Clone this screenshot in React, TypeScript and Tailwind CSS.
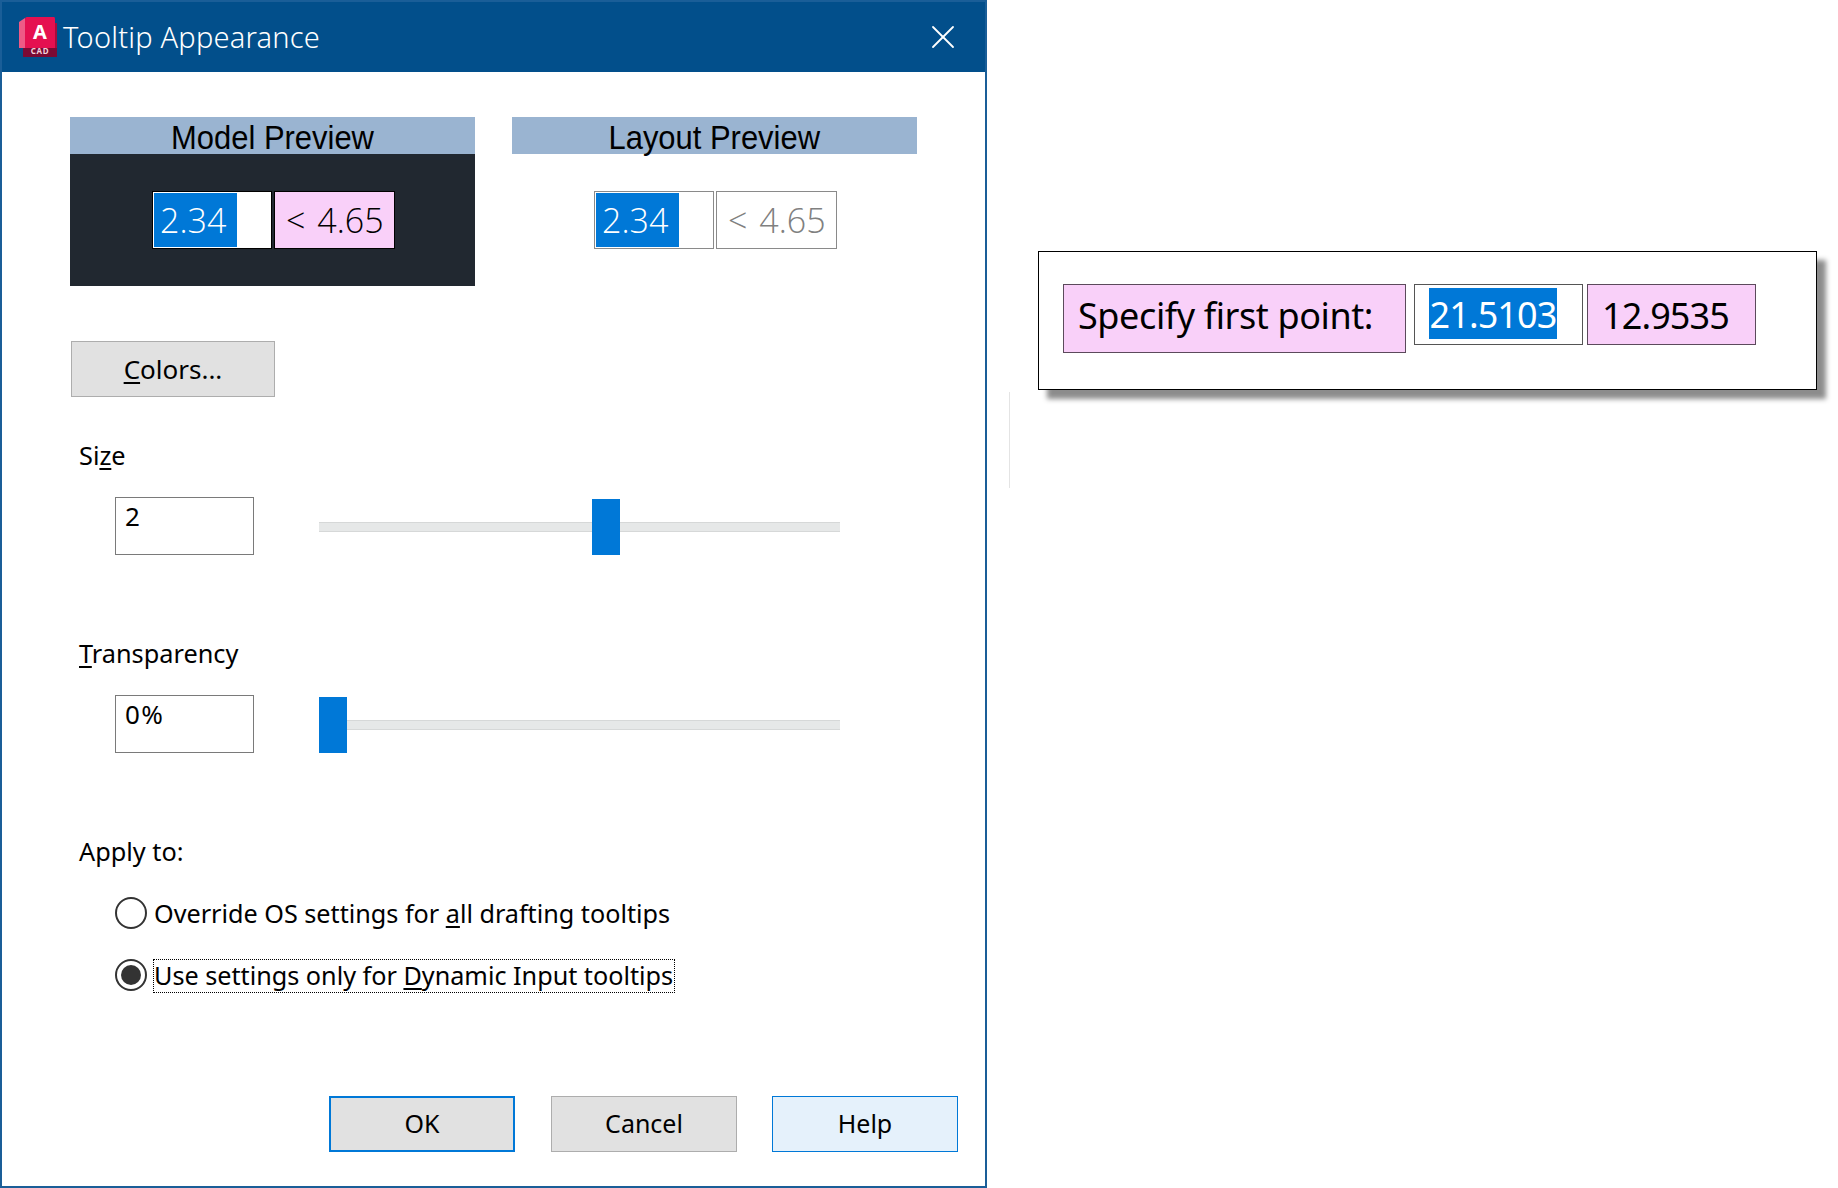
import React from "react";
import { X } from "lucide-react";

const ui = "font-['Noto_Sans','Open_Sans',sans-serif]";

const AutoCadLogo = () => (
  <svg width="38" height="41" viewBox="0 0 38 41" className="shrink-0">
    <path d="M0 5 L6 1 L6 31 L0 31 Z" fill="#ee5a86" />
    <path d="M4 31 H38 V40 H4 Z" fill="#7a0a34" />
    <path d="M6 2 Q6 0 8 0 H35 Q36 0 36 2 V31 H6 Z" fill="#e51050" />
    <path d="M36 6 H38 V31 H36 Z" fill="#a50c3c" />
    <text x="21" y="22" textAnchor="middle" fontSize="20" fontWeight="700" fill="#fff" fontFamily="Noto Sans, sans-serif">A</text>
    <text x="21" y="36.5" textAnchor="middle" fontSize="8" fontWeight="700" fill="#f3d4dc" letterSpacing="0.6" fontFamily="Noto Sans, sans-serif">CAD</text>
  </svg>
);

const PreviewFields = ({ dark }: { dark: boolean }) => (
  <div className={`h-[132px] flex items-center justify-center gap-[2px] pl-[2px] ${dark ? "bg-[#212830]" : "bg-white"}`}>
    <div className={`w-[120px] h-[58px] bg-white border p-[1px] ${dark ? "border-black" : "border-[#8a8a8a]"}`}>
      <div className="w-[83px] h-full bg-[#0078d7] text-white text-[34px] leading-[54px] pl-[6px] font-['Open_Sans',sans-serif] font-light">
        2.34
      </div>
    </div>
    <div className={`w-[121px] h-[58px] border pl-[11px] text-[34px] leading-[56px] font-['Open_Sans',sans-serif] font-light [word-spacing:3px] whitespace-nowrap ${dark ? "border-black bg-[#f9d0f9] text-black" : "border-[#8a8a8a] bg-white text-[#808080]"}`}>
      &lt; 4.65
    </div>
  </div>
);

const Preview = ({ title, dark }: { title: string; dark: boolean }) => (
  <div className="w-[405px]">
    <div className="h-[37px] bg-[#9ab4d1] text-center text-black text-[34px] leading-[37px] font-['Liberation_Sans',sans-serif]">
      <span className="inline-block scale-x-[0.91] translate-y-[2px]">{title}</span>
    </div>
    <PreviewFields dark={dark} />
  </div>
);

const SliderRow = ({ value, thumbLeft }: { value: string; thumbLeft: string }) => (
  <div className="flex ml-[45px] mt-[24px] h-[58px]">
    <div className="w-[139px] h-[58px] border border-[#7a7a7a] pl-[9px] text-[26px] leading-[36px] tracking-[1.5px]">{value}</div>
    <div className="relative w-[521px] ml-[65px] h-[58px] flex items-center">
      <div className="w-full h-[10px] mt-[2px] bg-[#e6e8e8] border-y border-[#d6d8d8]" />
      <div className={`absolute bottom-0 w-[28px] h-[56px] bg-[#0078d7] ${thumbLeft}`} />
    </div>
  </div>
);

const Radio = ({ checked }: { checked?: boolean }) => (
  <div className="w-[32px] h-[32px] rounded-full border-2 border-[#333] flex items-center justify-center shrink-0">
    {checked && <div className="w-[20px] h-[20px] rounded-full bg-[#333]" />}
  </div>
);

const FooterButton = ({ label, className }: { label: string; className: string }) => (
  <button type="button" className={`h-[56px] text-[25px] text-black flex items-center justify-center ${className}`}>
    {label}
  </button>
);

export default function App() {
  return (
    <div className={`w-[1838px] h-[1188px] bg-white flex text-black ${ui}`}>
      <div className="w-[987px] h-[1188px] flex flex-col border-2 border-[#1a5e98]">
        <div className="h-[70px] bg-[#024f8b] flex items-center pl-[17px] pr-[22px] shrink-0">
          <AutoCadLogo />
          <span className="ml-[6px] text-white text-[29px] font-light tracking-[0.2px]">Tooltip Appearance</span>
          <X className="ml-auto text-white" size={40} strokeWidth={1.1} />
        </div>

        <div className="flex-1 flex flex-col pl-[68px]">
          <div className="flex gap-[37px] mt-[45px]">
            <Preview title="Model Preview" dark />
            <Preview title="Layout Preview" dark={false} />
          </div>

          <button type="button" className="ml-[1px] mt-[55px] w-[204px] h-[56px] bg-[#e1e1e1] border border-[#adadad] text-[26px]">
            <u className="underline-offset-[3px]">C</u>olors...
          </button>

          <div className="ml-[9px] mt-[42px] h-[34px] text-[25.3px] leading-[32px]">
            Si<u className="underline-offset-[3px]">z</u>e
          </div>
          <SliderRow value="2" thumbLeft="left-[273px]" />

          <div className="ml-[9px] mt-[82px] h-[34px] text-[25.3px] leading-[32px]">
            <u className="underline-offset-[3px]">T</u>ransparency
          </div>
          <SliderRow value="0%" thumbLeft="left-0" />

          <div className="ml-[9px] mt-[82px] h-[34px] text-[25.3px] leading-[32px]">Apply to:</div>

          <div className="flex items-center ml-[45px] mt-[27px] h-[34px]">
            <Radio />
            <span className="ml-[7px] text-[25.2px] leading-[34px] whitespace-nowrap">
              Override OS settings for <u className="underline-offset-[3px]">a</u>ll drafting tooltips
            </span>
          </div>
          <div className="flex items-center ml-[45px] mt-[28px] h-[34px]">
            <Radio checked />
            <span className="ml-[6px] pr-[1px] pb-[2px] text-[25.2px] leading-[30px] whitespace-nowrap border border-dotted border-black translate-y-[1px]">
              Use settings only for <u className="underline-offset-[3px]">D</u>ynamic Input tooltips
            </span>
          </div>

          <div className="mt-auto mb-[34px] flex justify-end pr-[27px]">
            <FooterButton label="OK" className="w-[186px] bg-[#e1e1e1] border-2 border-[#0078d7]" />
            <FooterButton label="Cancel" className="w-[186px] ml-[36px] bg-[#e1e1e1] border border-[#adadad]" />
            <FooterButton label="Help" className="w-[186px] ml-[35px] bg-[#e5f1fb] border border-[#0078d7]" />
          </div>
        </div>
      </div>

      <div className="flex-1 pl-[22px] pt-[251px]">
        <div className="ml-[29px] w-[779px] h-[139px] bg-white border border-black shadow-[9px_9px_5px_rgba(0,0,0,0.45)] flex items-start pt-[32px] pl-[24px]">
          <div className="w-[343px] h-[69px] bg-[#f9d0f9] border border-[#5c4a5c] pl-[14px] text-[36px] leading-[62px] tracking-[-0.4px] whitespace-nowrap">
            Specify first point:
          </div>
          <div className="w-[169px] h-[61px] ml-[8px] bg-white border border-[#555] pl-[14px] pt-[3px]">
            <div className="w-[128px] h-[51px] bg-[#0078d7] text-white text-[36px] leading-[54px] text-center tracking-[-0.9px]">21.5103</div>
          </div>
          <div className="w-[169px] h-[61px] ml-[4px] bg-[#f9d0f9] border border-[#5c4a5c] pl-[14px] text-[36px] leading-[62px] tracking-[-0.9px]">
            12.9535
          </div>
        </div>
        <div className="mt-[2px] w-px h-[96px] bg-[#e4e4e4]" />
      </div>
    </div>
  );
}
